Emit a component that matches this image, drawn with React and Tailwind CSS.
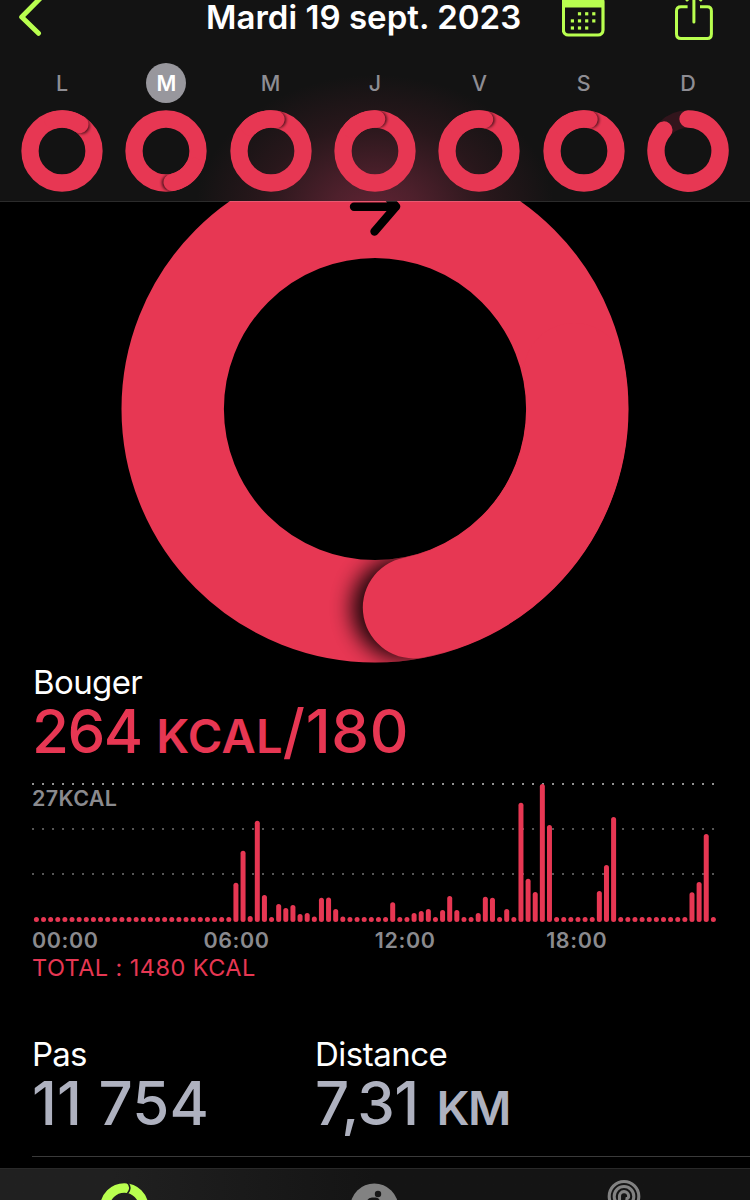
const MOVE = '#e73753'
const LIME = '#b9ff4f'

const days = [
  { label: 'L', angle: 394 },
  { label: 'M', angle: 529, selected: true },
  { label: 'M', angle: 369 },
  { label: 'J', angle: 363 },
  { label: 'V', angle: 370 },
  { label: 'S', angle: 369 },
  { label: 'D', angle: 311 },
]

// one bar per quarter of an hour, starting at index 28 (07:00)
const activeBars = [
  39.3, 71.3, 6, 101.3, 27, 5, 18, 14, 17, 8, 9, 5.6, 24.3, 24.6, 13, 5.6,
  5, 5, 5, 5, 5, 5, 19.7, 5, 5, 9, 11, 13, 5, 12, 26, 12, 5, 5, 9, 25.3, 24.3, 5, 13, 5,
  119.3, 43.3, 30, 138, 97, 5, 5, 5, 5, 5, 5, 31, 57, 105,
  5, 5, 5, 5, 5, 5, 5, 5, 5, 5, 29.7, 40, 88, 5,
]
const bars = [...Array(28).fill(5), ...activeBars]

const hours = ['00:00', '06:00', '12:00', '18:00']

function point(cx, cy, r, deg) {
  const a = (deg * Math.PI) / 180
  return [cx + r * Math.sin(a), cy - r * Math.cos(a)]
}

function arc(cx, cy, r, from, to) {
  const [x1, y1] = point(cx, cy, r, from)
  const [x2, y2] = point(cx, cy, r, to)
  return `M${x1} ${y1} A${r} ${r} 0 ${to - from > 180 ? 1 : 0} 1 ${x2} ${y2}`
}

function DayRing({ angle, id }) {
  const full = angle > 360
  const [hx, hy] = point(41, 41, 32, angle + 4)
  return (
    <svg width="82" height="82" viewBox="0 0 82 82">
      <defs>
        <mask id={id} maskUnits="userSpaceOnUse" x="0" y="0" width="82" height="82">
          <circle cx="41" cy="41" r="32" fill="none" stroke="#fff" strokeWidth="17.3" />
        </mask>
        <filter id={id + '-blur'} x="-50%" y="-50%" width="200%" height="200%">
          <feGaussianBlur stdDeviation="1.6" />
        </filter>
      </defs>
      {full ? (
        <>
          <circle cx="41" cy="41" r="32" fill="none" stroke={MOVE} strokeWidth="17.3" />
          <g mask={`url(#${id})`}>
            <circle cx={hx} cy={hy} r="8" fill="#000" opacity="0.7" filter={`url(#${id}-blur)`} />
          </g>
          <path d={arc(41, 41, 32, angle - 50, angle)} fill="none" stroke={MOVE} strokeWidth="17.3" strokeLinecap="round" />
        </>
      ) : (
        <>
          <circle cx="41" cy="41" r="32" fill="none" stroke="#32151c" strokeWidth="17.3" />
          <path d={arc(41, 41, 32, 0, angle)} fill="none" stroke={MOVE} strokeWidth="17.3" strokeLinecap="round" />
        </>
      )}
    </svg>
  )
}

function Header() {
  return (
    <header className="h-[201px] bg-[#131313] bg-[radial-gradient(ellipse_180px_140px_at_375px_215px,#602333_0%,#4e202c_25%,#28171b_65%,#131313_100%)]">
      <div className="flex h-[62px] items-start">
        <svg className="shrink-0" width="206" height="44" viewBox="0 0 206 44" fill="none" stroke={LIME}>
          <path d="M40 -1.5 L21.7 17 L38.5 33.3" strokeWidth="5" strokeLinecap="round" strokeLinejoin="round" />
        </svg>
        <h1 className="w-[356px] shrink-0 whitespace-nowrap text-[33px] leading-[34px] font-semibold tracking-[0.03px] text-white">
          Mardi 19 sept. 2023
        </h1>
        <svg className="shrink-0" width="44" height="44" viewBox="0 0 44 44">
          <rect x="1.4" y="-3" width="39.6" height="38" rx="5" fill="none" stroke={LIME} strokeWidth="3.2" />
          <rect x="1.2" y="-3" width="40" height="10.5" fill={LIME} />
          <g fill={LIME}>
            {[[17.5, 12.2], [24.7, 12.2], [31.8, 12.2], [10.4, 19.3], [17.5, 19.3], [24.7, 19.3], [31.8, 19.3], [10.4, 26.4], [17.5, 26.4], [24.7, 26.4]].map(([x, y]) => (
              <rect key={x + '-' + y} x={x - 1.6} y={y} width="3.2" height="3.2" />
            ))}
          </g>
        </svg>
        <svg className="ml-[69px] shrink-0" width="40" height="44" viewBox="0 0 40 44" fill="none" stroke={LIME} strokeWidth="3">
          <path d="M12.6 6.8 H6 Q1.5 6.8 1.5 11 V34 Q1.5 38.5 6 38.5 H32.3 Q36.4 38.5 36.4 34 V11 Q36.4 6.8 32.3 6.8 H25" />
          <path d="M18.9 -6 V22" strokeLinecap="round" />
          <path d="M12 0 L18.9 -7 L25.8 0" strokeLinecap="round" />
        </svg>
      </div>
      <div className="flex justify-between px-[21px]">
        {days.map((d, i) => (
          <div key={i} className="flex w-[82px] flex-col items-center">
            <span
              className={
                d.selected
                  ? 'mt-px flex h-10 w-10 items-center justify-center rounded-full bg-[#98979d] text-[21.5px] font-semibold text-white'
                  : 'mt-px flex h-10 w-10 items-center justify-center text-[21.5px] font-medium text-[#8e8d93]'
              }
            >
              {d.label}
            </span>
            <div className="mt-[7px]">
              <DayRing angle={d.angle} id={'day' + i} />
            </div>
          </div>
        ))}
      </div>
    </header>
  )
}

function MoveRing() {
  const cy = 208
  return (
    <svg className="block" width="750" height="462" viewBox="0 0 750 462">
      <defs>
        <mask id="ring" maskUnits="userSpaceOnUse" x="0" y="0" width="750" height="462">
          <circle cx="375" cy={cy} r="202.3" fill="none" stroke="#fff" strokeWidth="102.4" />
        </mask>
        <filter id="headShadow" x="-50%" y="-50%" width="200%" height="200%">
          <feGaussianBlur stdDeviation="10.5" />
        </filter>
        <filter id="soft" x="-20%" y="-20%" width="140%" height="140%">
          <feGaussianBlur stdDeviation="0.6" />
        </filter>
      </defs>
      <circle cx="375" cy={cy} r="202.3" fill="none" stroke={MOVE} strokeWidth="102.4" />
      <g mask="url(#ring)">
        <circle cx="403" cy={cy + 199} r="51" fill="#000" opacity="0.9" filter="url(#headShadow)" />
      </g>
      <path d={arc(375, cy, 202.3, 80, 169)} fill="none" stroke={MOVE} strokeWidth="101.6" strokeLinecap="round" />
      <path
        d="M354 5.8 H396 M374 -20 L396 5.5 L374.5 30.5"
        fill="none"
        stroke="#000"
        strokeWidth="8.4"
        strokeLinecap="round"
        strokeLinejoin="round"
        filter="url(#soft)"
      />
      <rect width="750" height="1" fill="#fff" opacity="0.17" />
    </svg>
  )
}

function Chart() {
  return (
    <div className="relative mt-[22px]">
      <svg className="block" width="750" height="140" viewBox="0 0 750 140">
        {[0, 45, 90].map((y) => (
          <path key={y} d={`M32 ${y + 1} H714`} stroke={y === 0 ? '#929292' : '#565656'} strokeWidth="2" strokeDasharray="2 8" />
        ))}
        {bars.map((h, i) => (
          <rect key={i} x={33.9 + i * 7.126} y={139 - h} width="5" height={h} rx="2.5" fill={MOVE} />
        ))}
      </svg>
      <span className="absolute top-[3px] left-8 text-[21.5px] leading-6 font-semibold tracking-[0.35px] text-[#8a8a8e]">27KCAL</span>
    </div>
  )
}

function TabBar() {
  return (
    <nav className="mt-[11px] flex h-8 border-t border-[#292929] bg-linear-to-r from-[#202020] from-15% to-[#141414] to-50% pl-[99px]">
      <svg width="50" height="31" viewBox="0 0 50 31">
        <circle cx="25.3" cy="38.3" r="19.4" fill="none" stroke={LIME} strokeWidth="9.5" />
        <path d="M27.8 13 Q33.5 18.5 28.5 24.5" fill="none" stroke="#1b1b1b" strokeWidth="1.5" />
      </svg>
      <svg className="ml-[200px]" width="50" height="31" viewBox="0 0 50 31">
        <circle cx="25.3" cy="38.5" r="24" fill="#828282" />
        <circle cx="29" cy="25" r="3.2" fill="#171717" />
        <path d="M18 32 Q19 28.5 23 28.5 H27 Q30 28.5 31 32 Z" fill="#171717" />
      </svg>
      <svg className="ml-[205px]" width="40" height="31" viewBox="0 0 40 31" fill="none" stroke="#828282" strokeWidth="3.1">
        <circle cx="20" cy="27.3" r="14.8" />
        <circle cx="20" cy="27.3" r="9.8" />
        <path d="M15.5 31 V27.5 A4.6 4.6 0 0 1 24.7 27 Q24.7 30 21.5 29.5" />
      </svg>
    </nav>
  )
}

export default function App() {
  return (
    <div className="h-[1200px] w-[750px] overflow-hidden bg-black font-['Inter','Liberation_Sans',sans-serif]">
      <Header />
      <MoveRing />
      <section>
        <h2 className="pl-[33px] text-[33px] leading-[38px] tracking-[-0.6px] text-white">Bouger</h2>
        <p className="pl-8 text-[60px] leading-[60px] font-medium whitespace-nowrap text-[#e73753]">
          <span className="tracking-[-1.5px]">264 </span>
          <span className="text-[47px] leading-none font-semibold tracking-[0.3px]">KCAL</span>
          <span className="tracking-[0.7px]">/180</span>
        </p>
        <Chart />
        <div className="mt-[5px] flex pl-8 text-[21.5px] leading-6 font-semibold tracking-[0.6px] text-[#8a8a8e]">
          {hours.map((h) => (
            <span key={h} className="w-[171.4px]">{h}</span>
          ))}
        </div>
        <p className="mt-0.5 pl-8 text-[23.5px] leading-7 whitespace-nowrap tracking-[0.43px] text-[#e73753]">TOTAL : 1480 KCAL</p>
      </section>
      <section className="mt-[53px] flex pl-8 whitespace-nowrap">
        <div className="w-[283px]">
          <h2 className="text-[33px] leading-[38px] tracking-[-0.8px] text-white">Pas</h2>
          <p className="text-[60px] leading-[60px] font-medium tracking-[0.2px] text-[#aeb1bf]">11 754</p>
        </div>
        <div>
          <h2 className="text-[33px] leading-[38px] tracking-[-0.5px] text-white">Distance</h2>
          <p className="text-[60px] leading-[60px] font-medium tracking-[-0.6px] text-[#aeb1bf]">
            7,31 <span className="ml-[2.5px] text-[47px] leading-none font-semibold tracking-[-1.5px]">KM</span>
          </p>
        </div>
      </section>
      <div className="mt-[23px] ml-8 h-px bg-[#3a3a3a]" />
      <TabBar />
    </div>
  )
}
